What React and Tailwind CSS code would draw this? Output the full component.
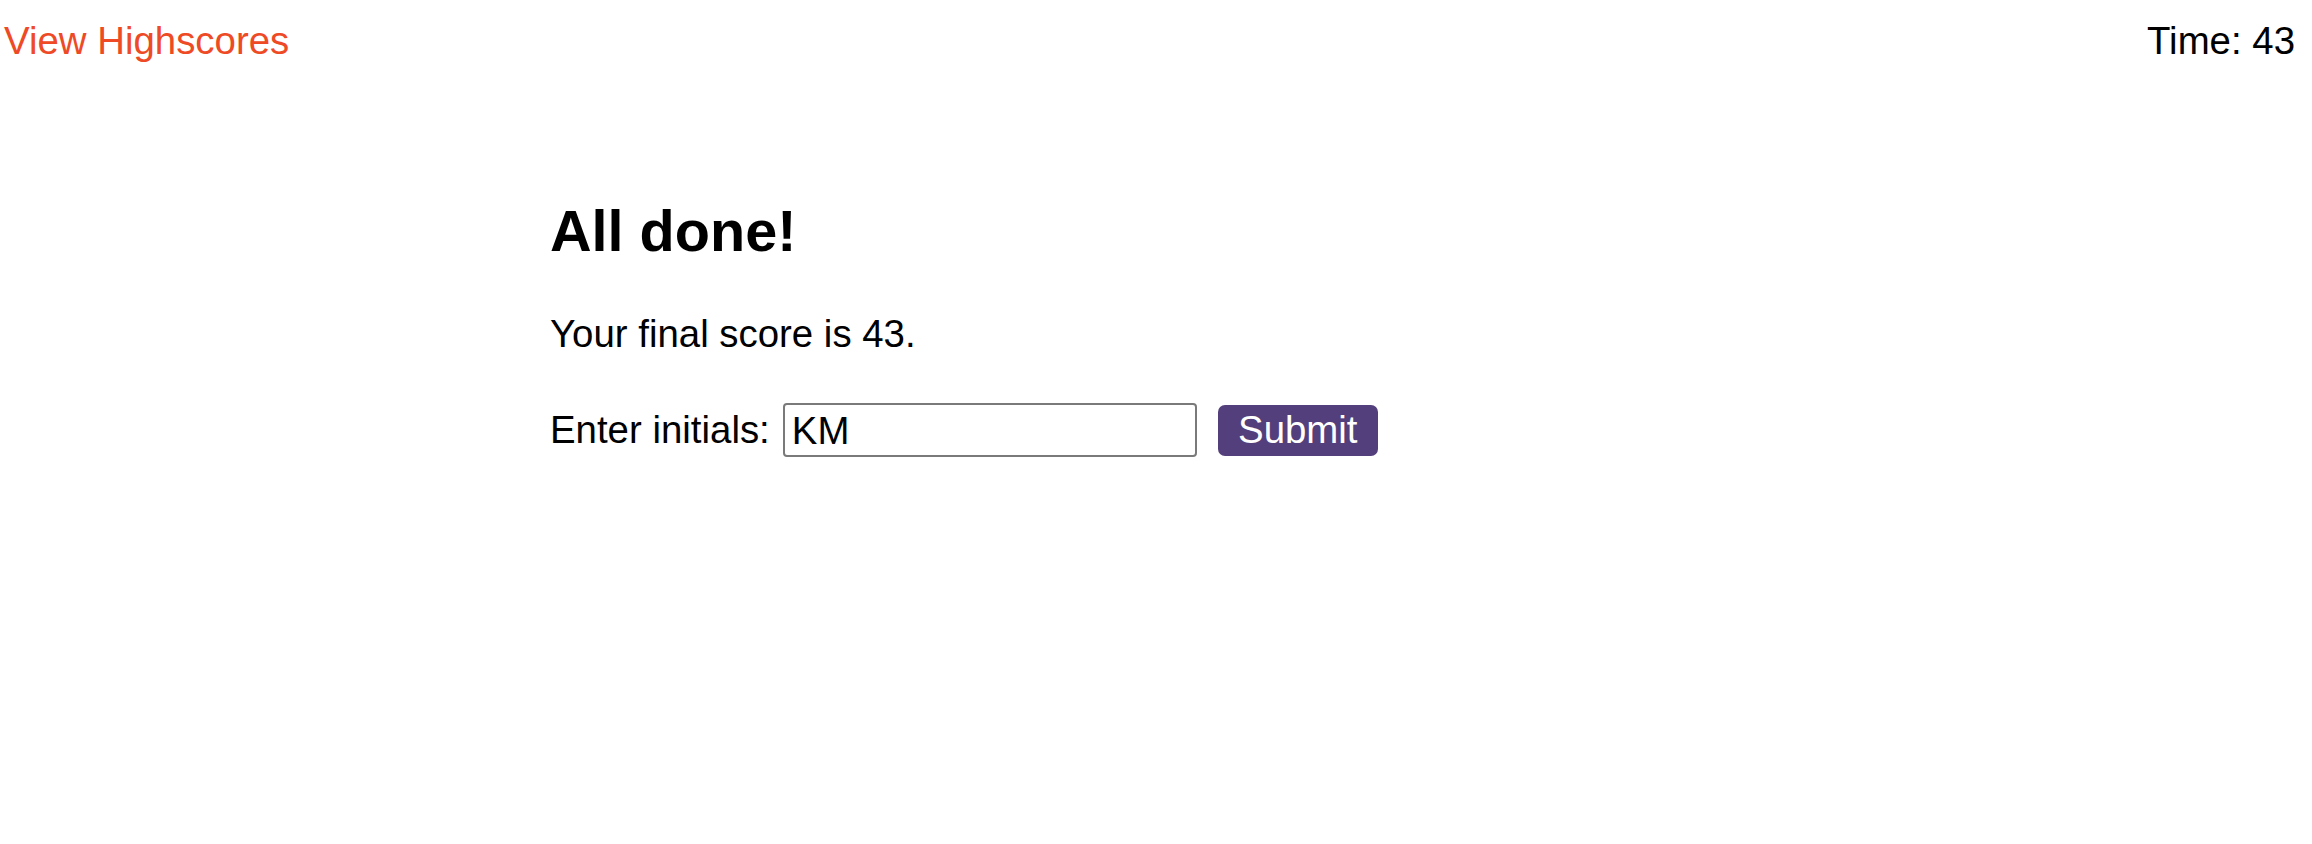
import React, { useState } from "react";

const App = () => {
  const [initials, setInitials] = useState("KM");

  return (
    <div
      className="min-h-screen bg-white text-black"
      style={{ fontFamily: '"Liberation Sans", Arial, sans-serif' }}
    >
      {/* Barra superior */}
      <header className="flex justify-between items-start pt-[19px] pl-[4px] pr-[17px] text-[38.4px] leading-[44px]">
        <a href="#" className="text-[#ee4a26]">
          View Highscores
        </a>
        <span>Time: 43</span>
      </header>

      {/* Pantalla final */}
      <main className="mx-auto w-[1212px] mt-[135px]">
        <h2 className="text-[57.6px] font-bold leading-[66px]">All done!</h2>
        <p className="mt-[48px] text-[38.4px] leading-[44px]">
          Your final score is 43.
        </p>
        <form
          className="mt-[47px] flex items-center text-[38.4px]"
          onSubmit={(e) => e.preventDefault()}
        >
          <label htmlFor="initials" className="leading-[44px]">
            Enter initials:
          </label>
          <input
            id="initials"
            value={initials}
            onChange={(e) => setInitials(e.target.value)}
            className="ml-[13px] w-[414px] h-[54px] border-2 border-[#7a7a7a] rounded-[4px] px-[7px] pt-[2px] text-[38.4px] outline-none"
          />
          <button
            type="submit"
            className="ml-[21px] w-[160px] h-[51px] bg-[#533f7b] text-white rounded-[7px] text-[38.4px] leading-none"
          >
            Submit
          </button>
        </form>
      </main>
    </div>
  );
};

export default App;
